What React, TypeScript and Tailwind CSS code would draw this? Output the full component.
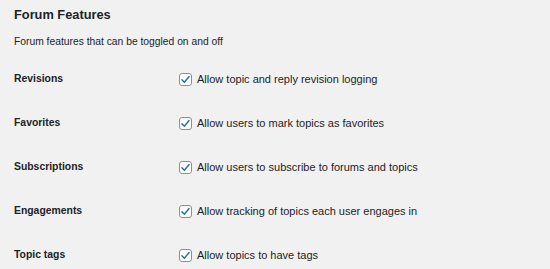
import React from "react";

const rows = [
  ["Revisions", "Allow topic and reply revision logging"],
  ["Favorites", "Allow users to mark topics as favorites"],
  ["Subscriptions", "Allow users to subscribe to forums and topics"],
  ["Engagements", "Allow tracking of topics each user engages in"],
  ["Topic tags", "Allow topics to have tags"],
];

function Check() {
  return (
    <span className="w-[13px] h-[13px] shrink-0 rounded-[3px] border border-[#8c8f94] bg-white flex items-center justify-center">
      <svg width="11" height="11" viewBox="0 0 20 20">
        <path d="M3.5 10.5 L8 15 L16.5 4.5" fill="none" stroke="#2271b1" strokeWidth="2.6" strokeLinecap="round" strokeLinejoin="round" />
      </svg>
    </span>
  );
}

export default function App() {
  return (
    <div className="w-[550px] h-[269px] overflow-hidden bg-[#f1f1f1] text-[#1d2327] pl-[14px] pt-[6px]" style={{ fontFamily: '"Liberation Sans", Arial, sans-serif' }}>
      <h2 className="text-[12.8px] font-bold leading-[18px]">Forum Features</h2>
      <p className="text-[10.3px] leading-[14px] mt-[11px]">Forum features that can be toggled on and off</p>
      <div className="mt-[8px] flex flex-col">
        {rows.map(([label, desc]) => (
          <div key={label} className="flex items-center h-[44px]">
            <div className="w-[165px] text-[10.4px] font-bold">{label}</div>
            <label className="flex items-center gap-[5px] text-[11px]">
              <Check />
              <span>{desc}</span>
            </label>
          </div>
        ))}
      </div>
    </div>
  );
}
